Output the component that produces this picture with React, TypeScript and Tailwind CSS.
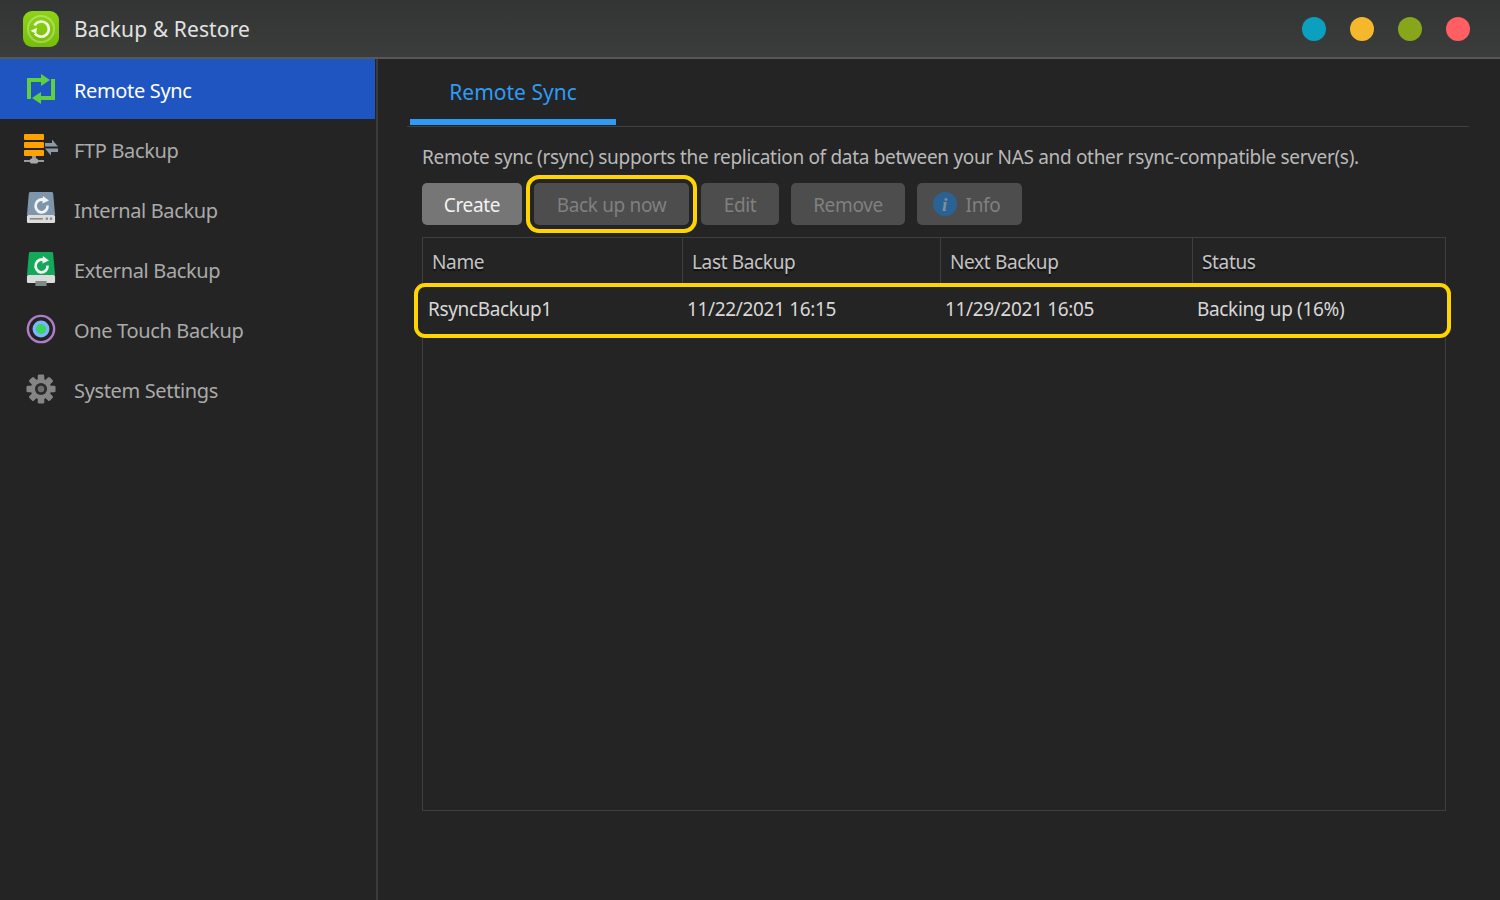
import type { ReactNode } from "react";

const AppIcon = () => (
  <svg width="36" height="36" viewBox="0 0 36 36">
    <defs>
      <linearGradient id="appGreen" x1="0" y1="0" x2="0" y2="1">
        <stop offset="0" stopColor="#8fd414" />
        <stop offset="1" stopColor="#76bd08" />
      </linearGradient>
    </defs>
    <rect width="36" height="36" rx="9" fill="url(#appGreen)" />
    <circle cx="18" cy="18" r="13" fill="none" stroke="#ffffff" strokeOpacity="0.3" strokeWidth="2" />
    <path d="M11.5 14.5A7.6 7.6 0 1 1 12 22.5" fill="none" stroke="#f3fbe6" strokeWidth="2.6" />
    <path d="M7.8 18.5l7.2-.6-3 5.4z" fill="#f3fbe6" transform="rotate(-20 11 20)" />
  </svg>
);

const SyncIcon = () => (
  <svg width="28" height="30" viewBox="0 0 28 30">
    <path d="M2 25V6h13" fill="none" stroke="#5fd03f" strokeWidth="4" />
    <path d="M14 0l9 6-9 6z" fill="#5fd03f" />
    <path d="M26 5v19H13" fill="none" stroke="#5fd03f" strokeWidth="4" />
    <path d="M14 18l-9 6 9 6z" fill="#5fd03f" />
  </svg>
);

const FtpIcon = () => (
  <svg width="34" height="30" viewBox="0 0 34 30">
    <rect x="0" y="0" width="20" height="6" rx="1" fill="#ffa200" />
    <rect x="0" y="8" width="20" height="6" rx="1" fill="#ffa200" />
    <rect x="0" y="16" width="20" height="6" rx="1" fill="#ffa200" />
    <rect x="8" y="22" width="4" height="3" fill="#9a9a9a" />
    <rect x="0" y="26" width="20" height="2" fill="#9a9a9a" />
    <rect x="6" y="24.5" width="8" height="5" rx="1.5" fill="#a8a8a8" />
    <path d="M21 12.5h13l-6-7v3.500h-7z" fill="#8b9aa6" />
    <path d="M34 14.500h-13l6 7v-3.500h7z" fill="#8b9aa6" />
  </svg>
);

const DriveIcon = ({ body, foot }: { body: string; foot?: boolean }) => (
  <svg width="30" height="34" viewBox="0 0 32 34" preserveAspectRatio="none">
    <path d="M3 1.500A1.500 1.500 0 0 1 4.500 0h23A1.500 1.500 0 0 1 29 1.500L31 23H1z" fill={body} />
    <rect x="1" y="23" width="30" height="8" rx="1.500" fill="#dcdcdc" />
    {foot ? (
      <rect x="10" y="29" width="12" height="5" fill="#7d8b87" />
    ) : (
      <>
        <rect x="4" y="26" width="14" height="1.600" fill="#8a8a8a" />
        <rect x="21" y="25.500" width="2.400" height="2.400" fill="#8a8a8a" />
        <rect x="25.500" y="25.500" width="2.400" height="2.400" fill="#8a8a8a" />
      </>
    )}
    <path d="M20 8.500A6.400 6.400 0 1 0 23 13.500" fill="none" stroke="#f2f2f2" strokeWidth="2.800" />
    <path d="M18 4l6.500 4.500-7 3z" fill="#f2f2f2" />
  </svg>
);

const TouchIcon = () => (
  <svg width="30" height="30" viewBox="0 0 32 32">
    <circle cx="16" cy="16" r="14" fill="none" stroke="#b07cc8" strokeWidth="2.600" />
    <circle cx="16" cy="16" r="9" fill="#7fb2ff" />
    <circle cx="16" cy="16" r="5.400" fill="#37d65c" />
  </svg>
);

const GearIcon = () => (
  <svg width="30" height="30" viewBox="0 0 32 32">
    <g fill="#858585">
      {[0, 45, 90, 135, 180, 225, 270, 315].map((a) => (
        <rect key={a} x="12.500" y="0.500" width="7" height="8" rx="1.500" transform={`rotate(${a} 16 16)`} />
      ))}
    </g>
    <circle cx="16" cy="16" r="11" fill="#858585" />
    <circle cx="16" cy="16" r="6.500" fill="#2c2c2c" />
    <circle cx="16" cy="16" r="3.500" fill="#6e6e6e" />
  </svg>
);

const InfoIcon = () => (
  <span className="flex h-[24px] w-[24px] items-center justify-center rounded-full bg-[#2a6294] font-['Liberation_Serif',serif] text-[19px] font-bold italic leading-none text-[#7d8f9f]">
    i
  </span>
);

const navItems: { label: string; icon: ReactNode; active?: boolean }[] = [
  { label: "Remote Sync", icon: <SyncIcon />, active: true },
  { label: "FTP Backup", icon: <FtpIcon /> },
  { label: "Internal Backup", icon: <DriveIcon body="#7e96ab" /> },
  { label: "External Backup", icon: <DriveIcon body="#13a85a" foot /> },
  { label: "One Touch Backup", icon: <TouchIcon /> },
  { label: "System Settings", icon: <GearIcon /> },
];

const dots = ["bg-[#0ca0c0]", "bg-[#f5b82c]", "bg-[#88a61c]", "bg-[#ff5f63]"];

const Btn = ({ className, children }: { className: string; children: ReactNode }) => (
  <div className={`flex h-[42px] items-center justify-center rounded-[5px] text-[19px] tracking-[-0.35px] ${className}`}>
    {children}
  </div>
);

const headerShadow = "[text-shadow:0_2px_1px_rgba(0,0,0,0.55)]";

export default function App() {
  return (
    <div className="flex h-[900px] w-[1500px] flex-col overflow-hidden bg-[#242424] font-['Noto_Sans',sans-serif] text-[20px] tracking-[-0.35px]">
      {/* title bar */}
      <header className="flex h-[59px] shrink-0 items-center border-b-2 border-[#575858] bg-gradient-to-b from-[#333535] to-[#3b3d3d] pl-[23px] pr-[30px]">
        <AppIcon />
        <span className="ml-[15px] pt-[2px] text-[21px] tracking-[0.1px] text-[#e2e2e2]">Backup &amp; Restore</span>
        <div className="ml-auto flex gap-[24px]">
          {dots.map((d) => (
            <span key={d} className={`h-[24px] w-[24px] rounded-full ${d}`} />
          ))}
        </div>
      </header>

      <div className="flex min-h-0 flex-1">
        {/* sidebar */}
        <nav className="w-[378px] shrink-0 border-r-2 border-[#3a3a3a] pr-[1px]">
          {navItems.map((item) => (
            <div
              key={item.label}
              className={`flex h-[60px] items-center ${item.active ? "bg-[#1f55c0] text-white" : "text-[#aaaaaa]"}`}
            >
              <span className="flex w-[74px] shrink-0 justify-center pl-[8px]">{item.icon}</span>
              <span className="pt-[4px]">{item.label}</span>
            </div>
          ))}
        </nav>

        {/* content */}
        <main className="min-w-0 flex-1 pl-[29px] pr-[31px]">
          <div className="h-[68px] border-b border-[#3f3f3f]">
            <div className="ml-[3px] flex h-[66px] w-[206px] items-center justify-center border-b-[6px] border-[#2f9bf5] pt-[7px] text-[21px] tracking-normal text-[#2f9bf5]">
              Remote Sync
            </div>
          </div>

          <div className="pl-[15px] pr-[23px]">
            <p className="mt-[16px] h-[28px] whitespace-nowrap text-[19px] leading-[28px] tracking-[-0.32px] text-[#b9b9b9]">
              Remote sync (rsync) supports the replication of data between your NAS and other rsync-compatible server(s).
            </p>

            <div className="mt-[12px] flex gap-[12px]">
              <Btn className="w-[100px] bg-[#767676] pt-[2px] text-[#f2f2f2]">Create</Btn>
              <Btn className="w-[155px] bg-[#4d4d4d] pt-[2px] text-[#808080] outline outline-[4px] outline-offset-[4px] outline-[#ffd500]">
                Back up now
              </Btn>
              <Btn className="w-[78px] bg-[#4d4d4d] pt-[2px] text-[#808080]">Edit</Btn>
              <Btn className="w-[114px] bg-[#4d4d4d] pt-[2px] text-[#808080]">Remove</Btn>
              <Btn className="w-[105px] gap-[9px] bg-[#4d4d4d] pr-[6px] text-[#808080]">
                <InfoIcon />
                <span className="pt-[2px]">Info</span>
              </Btn>
            </div>

            {/* table */}
            <div className="mt-[12px] h-[574px] border border-[#3f3f3f] text-[19px]">
              <div className="grid h-[45px] grid-cols-[260px_258px_252px_1fr] text-[#c4c4c4]">
                {["Name", "Last Backup", "Next Backup", "Status"].map((h, i) => (
                  <div
                    key={h}
                    className={`flex items-center pl-[9px] pt-[3px] ${headerShadow} ${i < 3 ? "border-r border-[#3f3f3f]" : ""}`}
                  >
                    {h}
                  </div>
                ))}
              </div>
              <div className="-ml-[9px] -mr-[6px] grid h-[55px] grid-cols-[265px_258px_252px_1fr] items-center rounded-[11px] border-4 border-[#ffd500] bg-[#242424] pb-[3px] text-[#d8d8d8]">
                <span className="pl-[10px]">RsyncBackup1</span>
                <span className="pl-[4px]">11/22/2021 16:15</span>
                <span className="pl-[4px]">11/29/2021 16:05</span>
                <span className="pl-[4px]">Backing up (16%)</span>
              </div>
            </div>
          </div>
        </main>
      </div>
    </div>
  );
}
